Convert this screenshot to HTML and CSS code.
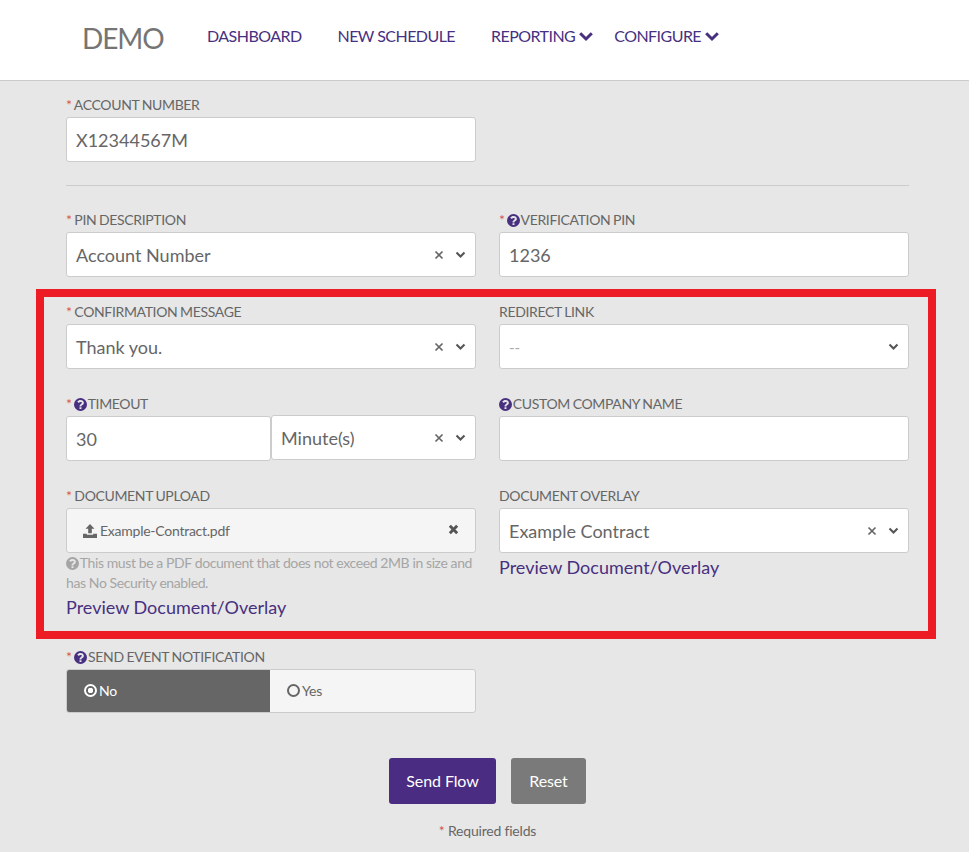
FILE: index.html
```html
<!DOCTYPE html>
<html lang="en">
<head>
<meta charset="utf-8">
<title>Demo</title>
<link rel="stylesheet" href="styles.css">
</head>
<body>
<svg class="defs" width="0" height="0" aria-hidden="true">
  <symbol id="q" viewBox="0 0 24 24">
    <path fill-rule="evenodd" d="M12 0a12 12 0 1 0 0 24a12 12 0 0 0 0-24zM10.2 17h3.6v3.4h-3.6zM12 3.6c3.6 0 6.2 2.2 6.2 5.2c0 2.2-1.2 3.3-2.6 4.2c-1.2.8-1.8 1.2-1.8 2.5h-3.6c0-2.6 1.2-3.6 2.7-4.6c1.1-.7 1.7-1.1 1.7-2c0-1-.9-1.7-2.4-1.7c-1.4 0-2.4.6-3.4 1.8L6 6.6C7.4 4.7 9.400 3.600 12 3.600z"/>
  </symbol>
  <symbol id="chev" viewBox="0 0 16 12">
    <path d="M2.200 3.200L8 9l5.800-5.800" fill="none" stroke="currentColor" stroke-width="3"/>
  </symbol>
  <symbol id="x" viewBox="0 0 10 10">
    <path d="M1.500 1.500l7 7M8.500 1.500l-7 7" fill="none" stroke="currentColor" stroke-width="1.700"/>
  </symbol>
  <symbol id="xb" viewBox="0 0 12 12">
    <path d="M2 2l8 8M10 2l-8 8" fill="none" stroke="currentColor" stroke-width="3.200"/>
  </symbol>
  <symbol id="up" viewBox="0 0 14 14">
    <path d="M7 0l4.500 4.800H8.800v4.400H5.200V4.800H2.500zM0 9.800h3.800v.9h6.400v-.9H14V14H0z" fill="currentColor"/>
  </symbol>
</svg>

<header class="topbar">
  <div class="logo">DEMO</div>
  <nav class="nav">
    <a class="nav-link">DASHBOARD</a>
    <a class="nav-link">NEW SCHEDULE</a>
    <a class="nav-link nav-drop">REPORTING<svg class="nav-chev"><use href="#chev"/></svg></a>
    <a class="nav-link nav-drop">CONFIGURE<svg class="nav-chev"><use href="#chev"/></svg></a>
  </nav>
</header>

<main class="form">
  <div class="field half">
    <label class="label"><span class="req">*</span> ACCOUNT NUMBER</label>
    <div class="control">X12344567M</div>
  </div>

  <hr class="divider">

  <div class="row">
    <div class="field">
      <label class="label"><span class="req">*</span> PIN DESCRIPTION</label>
      <div class="control select"><span class="value">Account Number</span><svg class="clear"><use href="#x"/></svg><svg class="chev"><use href="#chev"/></svg></div>
    </div>
    <div class="field">
      <label class="label"><span class="req">*</span> <svg class="help"><use href="#q"/></svg> VERIFICATION PIN</label>
      <div class="control">1236</div>
    </div>
  </div>

  <section class="highlight">
    <div class="row">
      <div class="field">
        <label class="label"><span class="req">*</span> CONFIRMATION MESSAGE</label>
        <div class="control select"><span class="value">Thank you.</span><svg class="clear"><use href="#x"/></svg><svg class="chev"><use href="#chev"/></svg></div>
      </div>
      <div class="field">
        <label class="label">REDIRECT LINK</label>
        <div class="control select"><span class="value placeholder">--</span><svg class="chev"><use href="#chev"/></svg></div>
      </div>
    </div>
    <div class="row">
      <div class="field">
        <label class="label"><span class="req">*</span> <svg class="help"><use href="#q"/></svg> TIMEOUT</label>
        <div class="pair">
          <div class="control">30</div>
          <div class="control select raised"><span class="value">Minute(s)</span><svg class="clear"><use href="#x"/></svg><svg class="chev"><use href="#chev"/></svg></div>
        </div>
      </div>
      <div class="field">
        <label class="label"><svg class="help"><use href="#q"/></svg> CUSTOM COMPANY NAME</label>
        <div class="control"></div>
      </div>
    </div>
    <div class="row last">
      <div class="field">
        <label class="label"><span class="req">*</span> DOCUMENT UPLOAD</label>
        <div class="upload"><svg class="upload-icon"><use href="#up"/></svg><span class="upload-name">Example-Contract.pdf</span><svg class="upload-x"><use href="#xb"/></svg></div>
        <p class="hint"><svg class="help muted"><use href="#q"/></svg> This must be a PDF document that does not exceed 2MB in size and has No Security enabled.</p>
        <a class="preview">Preview Document/Overlay</a>
      </div>
      <div class="field">
        <label class="label">DOCUMENT OVERLAY</label>
        <div class="control select"><span class="value">Example Contract</span><svg class="clear"><use href="#x"/></svg><svg class="chev"><use href="#chev"/></svg></div>
        <a class="preview near">Preview Document/Overlay</a>
      </div>
    </div>
  </section>

  <div class="field half">
    <label class="label"><span class="req">*</span> <svg class="help"><use href="#q"/></svg> SEND EVENT NOTIFICATION</label>
    <div class="toggle">
      <div class="opt on"><span class="radio checked"></span>No</div>
      <div class="opt"><span class="radio"></span>Yes</div>
    </div>
  </div>

  <div class="actions">
    <button class="btn primary" type="button">Send Flow</button>
    <button class="btn secondary" type="button">Reset</button>
  </div>
  <p class="required"><span class="req">*</span> Required fields</p>
</main>
</body>
</html>
```
FILE: styles.css
```css
* { box-sizing: border-box; }
html, body { margin: 0; height: 100%; }
body {
  background: #e7e7e7;
  color: #666;
  font-family: Lato, "Open Sans", sans-serif;
  overflow: hidden;
}
.defs { position: absolute; }

.topbar {
  height: 81px;
  background: #fff;
  border-bottom: 1px solid #ccc;
  display: flex;
  align-items: flex-start;
  padding-left: 82px;
}
.logo { font-size: 28px; line-height: 34px; margin-top: 21px; color: #757575; width: 125px; letter-spacing: -1.1px; }
.nav { display: flex; gap: 36px; margin-top: 26px; }
.nav-link { font-size: 16px; line-height: 20px; color: #47307f; letter-spacing: -0.55px; white-space: nowrap; display: flex; align-items: center; }
.nav-drop { margin-right: -16px; }
.nav-drop:last-child { margin-right: 0; }
.nav-chev { width: 16px; height: 12px; margin-left: 3px; color: #47307f; }

.form { width: 909px; padding: 14px 0 0 66px; }
.half { width: 410px; }
.label { display: block; height: 20px; margin-bottom: 2px; font-size: 14px; line-height: 20px; color: #666; letter-spacing: -0.35px; word-spacing: -0.5px; white-space: nowrap; }
.req { color: #d9534f; }
.help { width: 13px; height: 13px; vertical-align: -2px; fill: #47307f; margin-right: -2px; }
.help.muted { fill: #a5a5a5; }

.control {
  height: 45px;
  background: #fff;
  border: 1px solid #ccc;
  border-radius: 3px;
  padding: 0 9px;
  font-size: 18px;
  line-height: 45px;
  color: #666;
  min-width: 0;
}
.select { display: flex; align-items: center; }
.value { flex: 1; line-height: 43px; padding-top: 2px; }
.placeholder { color: #aaa; font-size: 15px; }
.clear { width: 10px; height: 10px; color: #666; margin-right: 11px; flex: none; }
.chev { width: 11px; height: 9px; color: #555; flex: none; }

.divider { border: 0; border-top: 1px solid #ccc; margin: 23px 0 24px; }
.row { display: grid; grid-template-columns: 410px 410px; column-gap: 23px; margin-bottom: 25px; align-items: start; }
.row.last { margin-bottom: 0; }

.highlight { margin: 12px -27px 8px -30px; border: 8px solid #ed1c24; padding: 5px 19px 13px 22px; }
.form > .row { margin-bottom: 0; }

.pair { display: grid; grid-template-columns: 205px 205px; }
.raised { margin-top: -1px; }

.upload { height: 45px; background: #f5f5f5; border: 1px solid #ccc; border-radius: 3px; display: flex; align-items: center; padding: 0 16px; font-size: 14px; color: #666; }
.upload-icon { width: 14px; height: 14px; margin-right: 3px; color: #666; flex: none; }
.upload-name { flex: 1; letter-spacing: -0.25px; }
.upload-x { width: 11px; height: 11px; color: #555; flex: none; margin-top: -2px; }
.hint { margin: 0 0 3px; font-size: 14px; line-height: 20px; color: #a5a5a5; letter-spacing: -0.4px; }
.preview { display: block; font-size: 18px; line-height: 22px; color: #47307f; }
.near { margin-top: 3px; }

.toggle { display: grid; grid-template-columns: 203px 1fr; height: 44px; border: 1px solid #ccc; border-radius: 3px; overflow: hidden; background: #f5f5f5; font-size: 14px; letter-spacing: -0.2px; }
.opt { display: flex; align-items: center; padding: 0 0 2px 17px; color: #666; }
.opt.on { background: #666; color: #fff; }
.radio { width: 13px; height: 13px; border: 2px solid #666; border-radius: 50%; margin-right: 2px; flex: none; }
.radio.checked { border-color: #fff; background: radial-gradient(circle, #fff 0 2.5px, transparent 3px); }

.actions { display: flex; justify-content: center; gap: 15px; margin: 45px 0 0; width: 843px; }
.btn { height: 46px; border: 0; border-radius: 3px; color: #fff; font: 16px/20px Lato, sans-serif; padding: 0; letter-spacing: -0.1px; }
.primary { width: 107px; background: #4a2c82; }
.secondary { width: 75px; background: #7a7a7a; }
.required { margin: 17px 0 0; width: 843px; text-align: center; font-size: 14px; line-height: 20px; color: #666; letter-spacing: -0.2px; }
```
